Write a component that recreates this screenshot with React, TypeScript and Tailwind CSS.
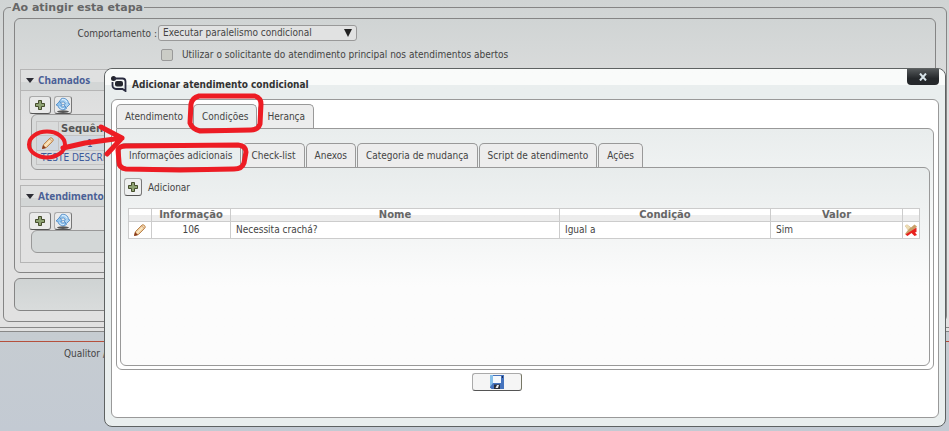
import type { ReactNode } from "react";

function PlusIcon() {
    return (
        <svg width="12" height="12" viewBox="0 0 12 12" aria-hidden="true">
            <path d="M4.500 1.500h3v3h3v3h-3v3h-3v-3h-3v-3h3z" fill="#8ea272" stroke="#454d2c" strokeWidth="1" />
        </svg>
    );
}

function RefreshIcon() {
    return (
        <svg width="16" height="16" viewBox="0 0 16 16" aria-hidden="true">
            <ellipse cx="8" cy="14.600" rx="6" ry="1.300" fill="#555" />
            <path d="M4 5 6.500 1.500C10 .5 13.500 3 13.500 6.500L15 7l-3.500 3.500L8.500 7.500l1.800-.5C10 5 8.500 4.500 7 5.200z" fill="#a9d2f3" stroke="#4a86c4" strokeWidth="0.800" />
            <path d="M1 8 4.500 4.500 7.500 8l-1.700.4C6.500 10 8 10.200 9.500 9.500l2 2C8.500 13.800 3.500 12.500 2.800 8.500z" fill="#8fc4f0" stroke="#4a86c4" strokeWidth="0.800" />
            <path d="M7 2.500c2-.5 4 .5 5 2.500M4.500 9.500c1 2 2.500 2.500 4.500 2" fill="none" stroke="#e3f2fd" strokeWidth="1" />
        </svg>
    );
}

function PencilIcon() {
    return (
        <svg width="14" height="14" viewBox="0 0 14 14" aria-hidden="true">
            <path d="M1.500 12.500 2.500 8.500 9 2c1.500-1 4 1 3 3L5.500 11.500z" fill="#efcd9b" stroke="#b98450" strokeWidth="1" />
            <path d="M4 10 10.500 3.500" stroke="#fdebc9" strokeWidth="1.300" />
            <path d="M1 13 2.100 9 5 12z" fill="#8a3a1c" />
            <path d="M8.500 2.800l3 3" stroke="#c9987a" strokeWidth="1" />
        </svg>
    );
}

function DeleteIcon() {
    return (
        <svg width="12" height="12" viewBox="0 0 12 12" aria-hidden="true">
            <path d="M0 2 2 .5 6 3.500 9.500.5 12 2.500 8 6.500 4.500 8.500 2 11.500 0 10 3 6z" fill="#c9a06a" />
            <path d="M11.500 3.500V8l-1.500.5 2 2.500-2.500 1L6.500 9 2.500 12 .5 10.500z" fill="#e8211d" />
            <path d="M0 2 2 .5 5.500 3.500 3 6z" fill="#ecdcb4" />
        </svg>
    );
}

function SaveIcon() {
    return (
        <svg width="14" height="14" viewBox="0 0 14 14" aria-hidden="true">
            <path d="M0 0h14v14H1.500L0 12.500z" fill="#4573bd" />
            <path d="M0 0h3v8L0 12z" fill="#86c0ea" />
            <path d="M3 1h8v7H3z" fill="#f4f8fc" />
            <path d="M12 1h1v2h-1z" fill="#1b2c5c" />
            <path d="M4 9.500h6V14H4z" fill="#2a2f3a" />
            <path d="M7 10h2l-1 3H5.500z" fill="#e8ebee" />
        </svg>
    );
}

function LogoIcon() {
    return (
        <svg width="16" height="16" viewBox="0 0 16 16" aria-hidden="true">
            <circle cx="2.500" cy="2.500" r="2.500" fill="#23252d" />
            <path d="M3 2.500h8.500a3 3 0 0 1 3 3V15l-3-2H5a3.500 3.500 0 0 1-3.500-3.500V6" fill="none" stroke="#2a2c40" strokeWidth="1.800" />
            <rect x="4" y="5" width="8" height="5.500" rx="2" fill="#23252d" />
        </svg>
    );
}

function IconButton({ label, wide, children }: { label: string; wide?: boolean; children: ReactNode }) {
    return (
        <button
            type="button"
            aria-label={label}
            className={`${wide ? "w-[22px]" : "w-[18px]"} flex h-[18px] items-center justify-center rounded-[3px] border border-[#aaa] border-r-[#777] border-b-[#555] bg-[#f0f0f0]/60`}
        >
            {children}
        </button>
    );
}

function Section({ title, children }: { title: string; children: ReactNode }) {
    return (
        <section className="border border-[#b5b5b5]">
            <h2 className="flex h-[21px] items-center gap-1 border-b border-[#b5b5b5] bg-linear-to-b from-[#dfe0e0] from-60% to-[#d3d6d6] to-60% pl-[5px] font-['Noto_Sans',sans-serif] font-bold text-[#4a5f96]">
                <svg width="8" height="5" viewBox="0 0 8 5" aria-hidden="true">
                    <path d="M0 0h8L4 5z" fill="#2c2c34" />
                </svg>
                {title}
            </h2>
            <div className="px-2 pt-[5px] pb-[9px]">
                <div className="flex gap-[3px]">
                    <IconButton label="Adicionar" wide>
                        <PlusIcon />
                    </IconButton>
                    <IconButton label="Atualizar">
                        <RefreshIcon />
                    </IconButton>
                </div>
                {children}
            </div>
        </section>
    );
}

function Tab({ title, active }: { title: string; active?: boolean }) {
    return (
        <button
            type="button"
            role="tab"
            aria-selected={!!active}
            className={`${active ? "bg-[#e9eeee]" : "bg-[#ededed]"} h-6 rounded-t-[5px] border border-b-0 border-[#999] px-2 whitespace-nowrap`}
        >
            {title}
        </button>
    );
}

function BackPage() {
    return (
        <>
            <main className="border-b border-[#888] bg-linear-to-b from-[#d0d4d4] to-[#e1e1e1] to-40% pb-[3px]">
                <div className="border-b border-[#888] pb-[5px]">
                    <fieldset className="mr-[2px] ml-[3px] rounded-md border border-[#858585] px-[10px] pt-1 pb-[10px]">
                        <legend className="-ml-[3px] h-[14px] px-px font-['DejaVu_Sans',sans-serif] text-[11px] leading-[15px] font-bold text-[#666]">Ao atingir esta etapa</legend>
                        <div className="rounded-md border border-[#858585] bg-linear-to-b from-[#d0d4d4] to-[#e1e1e1] to-40% px-[5px] pt-[6px] pb-[9px]">
                            <div className="flex items-center gap-px">
                                <label htmlFor="comportamento" className="w-[137px] text-right">
                                    Comportamento :
                                </label>
                                <div className="relative">
                                    <select id="comportamento" className="block h-4 w-[199px] appearance-none rounded-[3px] border border-[#999] bg-[#e1e2e2] px-1 leading-[14px]">
                                        <option>Executar paralelismo condicional</option>
                                    </select>
                                    <svg className="pointer-events-none absolute top-1 right-[5px]" width="8" height="8" viewBox="0 0 8 8" aria-hidden="true">
                                        <path d="M0 0h8L4 8z" fill="#222" />
                                    </svg>
                                </div>
                            </div>
                            <label className="mt-[7px] mb-2 ml-[141px] flex items-center gap-[9px] leading-[13px]">
                                <input type="checkbox" className="h-3 w-3 appearance-none rounded-[2px] border border-[#999] bg-[#cbccc6]" />
                                Utilizar o solicitante do atendimento principal nos atendimentos abertos
                            </label>
                            <div className="flex flex-col gap-[5px]">
                                <Section title="Chamados">
                                    <div className="ml-[2px] rounded-md border border-[#999] bg-[#d9dbdb] px-1 pt-[6px] pb-1">
                                        <table className="w-full border-collapse">
                                            <thead>
                                                <tr className="h-[14px] font-['DejaVu_Sans',sans-serif] leading-[12px] text-[#555]">
                                                    <th className="w-[22px] border border-[#c3c3c3]"></th>
                                                    <th className="border border-[#c3c3c3] pl-[2px] text-left">Sequência</th>
                                                </tr>
                                            </thead>
                                            <tbody>
                                                <tr className="h-[14px] bg-[#d0d7e0] leading-[13px] text-[#3d5a9b]">
                                                    <td className="border border-[#c3c3c3]">
                                                        <button type="button" aria-label="Editar" className="mx-auto block">
                                                            <PencilIcon />
                                                        </button>
                                                    </td>
                                                    <td className="border border-[#c3c3c3] pl-7">1</td>
                                                </tr>
                                                <tr className="leading-[13px] text-[#3d5a9b]">
                                                    <td colSpan={2} className="border border-[#c3c3c3] pl-1">
                                                        TESTE DESCRIÇÃO
                                                    </td>
                                                </tr>
                                            </tbody>
                                        </table>
                                    </div>
                                </Section>
                                <Section title="Atendimentos">
                                    <div className="ml-[2px] h-[23px] rounded-md border border-[#999] bg-[#d3d7d7]"></div>
                                </Section>
                            </div>
                        </div>
                        <div className="mt-[5px] h-[33px] rounded-md border border-[#858585] bg-linear-to-b from-[#cfd3d3] to-[#d9dcdc]"></div>
                    </fieldset>
                </div>
            </main>
            <footer className="flex-1 bg-linear-to-b from-[#c6ccd1] to-[#c3cad3] pt-[9px]">
                <div className="border-t border-[#b5503c] pt-1 pl-16 leading-[16px]">Qualitor /</div>
            </footer>
        </>
    );
}

const tabs = ["Atendimento", "Condições", "Herança"];
const subTabs = ["Informações adicionais", "Check-list", "Anexos", "Categoria de mudança", "Script de atendimento", "Ações"];

function Dialog() {
    return (
        <div
            role="dialog"
            aria-labelledby="dialog-title"
            className="absolute top-[68px] right-[3px] bottom-1 left-[104px] flex flex-col rounded-lg border border-[#5e6262] bg-[#e9eeee] px-[6px] pb-2"
        >
            <header className="-mx-[6px] flex h-[30px] shrink-0 items-start rounded-t-lg bg-linear-to-b from-[#f9fbfa] from-[16px] to-[#e9eeee] to-[16px] px-[6px]">
                <div className="flex h-[30px] flex-1 items-center gap-[5px]">
                    <LogoIcon />
                    <h1 id="dialog-title" className="font-bold text-[#333]">
                        Adicionar atendimento condicional
                    </h1>
                </div>
                <button
                    type="button"
                    aria-label="Fechar"
                    className="flex h-4 w-8 items-center justify-center rounded-b-[4px] bg-linear-to-b from-[#55595b] to-[#25282b] to-60%"
                >
                    <svg width="8" height="8" viewBox="0 0 8 8" aria-hidden="true">
                        <path d="M1 0.500 7 7.500M7 0.500 1 7.500" stroke="#d8e4ea" strokeWidth="2" />
                    </svg>
                </button>
            </header>
            <div className="flex flex-1 flex-col rounded-md border border-[#999] bg-white px-1 pt-1">
                <div role="tablist" className="flex gap-px">
                    {tabs.map((t) => (
                        <Tab key={t} title={t} active={t === "Condições"} />
                    ))}
                </div>
                <div className="rounded-b-md rounded-tr-md border border-[#999] bg-linear-to-b from-[#e9eded] to-white to-60% p-[3px] pt-[14px]">
                    <div role="tablist" className="flex gap-px">
                        {subTabs.map((t) => (
                            <Tab key={t} title={t} active={t === "Informações adicionais"} />
                        ))}
                    </div>
                    <div className="min-h-[199px] rounded-b-md rounded-tr-md border border-[#999] bg-linear-to-b from-[#e8ecec] to-[#fcfcfc] to-60% pt-[10px] pr-[9px] pl-[3px]">
                        <div className="flex items-center gap-[6px]">
                            <IconButton label="Adicionar informação">
                                <PlusIcon />
                            </IconButton>
                            Adicionar
                        </div>
                        <div className="mt-3 ml-1">
                            <table className="w-full table-fixed border-collapse bg-white">
                                <colgroup>
                                    <col className="w-[23px]" />
                                    <col className="w-[79px]" />
                                    <col />
                                    <col className="w-[211px]" />
                                    <col className="w-[132px]" />
                                    <col className="w-[17px]" />
                                </colgroup>
                                <thead>
                                    <tr className="h-[13px] bg-linear-to-b from-white from-50% to-[#ededed] to-50% font-['DejaVu_Sans',sans-serif] leading-[12px] text-[#666]">
                                        <th className="border border-[#ccc]"></th>
                                        <th className="border border-[#ccc]">Informação</th>
                                        <th className="border border-[#ccc]">Nome</th>
                                        <th className="border border-[#ccc]">Condição</th>
                                        <th className="border border-[#ccc]">Valor</th>
                                        <th className="border border-[#ccc]"></th>
                                    </tr>
                                </thead>
                                <tbody>
                                    <tr className="h-[17px] leading-[16px]">
                                        <td className="border border-[#ccc]">
                                            <button type="button" aria-label="Editar condição" className="mx-auto block">
                                                <PencilIcon />
                                            </button>
                                        </td>
                                        <td className="border border-[#ccc] text-center">106</td>
                                        <td className="border border-[#ccc] pl-[5px]">Necessita crachá?</td>
                                        <td className="border border-[#ccc] pl-[5px]">Igual a</td>
                                        <td className="border border-[#ccc] pl-[5px]">Sim</td>
                                        <td className="border border-[#ccc]">
                                            <button type="button" aria-label="Excluir condição" className="mx-auto block">
                                                <DeleteIcon />
                                            </button>
                                        </td>
                                    </tr>
                                </tbody>
                            </table>
                        </div>
                    </div>
                </div>
                <button
                    type="button"
                    aria-label="Salvar"
                    className="mx-auto mt-[3px] flex h-[18px] w-[50px] -translate-x-7 items-center justify-center rounded-[3px] border border-[#aaa] border-r-[#776] border-b-[#555] bg-[#f5f5f5]"
                >
                    <SaveIcon />
                </button>
            </div>
        </div>
    );
}

// Red marker strokes drawn over the screen
function Markers() {
    return (
        <svg className="pointer-events-none absolute top-0 left-0" width="320" height="200" viewBox="0 0 320 200" fill="none" stroke="#ed1c24" strokeWidth="5" strokeLinecap="round" strokeLinejoin="round" aria-hidden="true">
            <path d="M199 96 255 96Q261 98 261 104L260 124Q258 130 251 130L200 131Q192 129 190 123L191 104Q192 98 199 96z" />
            <path d="M126 146 238 145Q246 146 246 152L244 163Q242 169 234 169L180 170 126 169Q119 168 119 162L118 150Q119 146 126 146z" />
            <ellipse cx="47" cy="144.500" rx="18" ry="13" strokeWidth="4" />
            <path d="M63 148 85 143 122 138M101 127 122 138 107 154" strokeWidth="5" />
        </svg>
    );
}

export default function App() {
    return (
        <div className="relative flex min-h-screen flex-col overflow-hidden font-['DejaVu_Sans_Condensed','Noto_Sans',sans-serif] text-[10px] leading-[15px] text-[#444]">
            <BackPage />
            <Dialog />
            <Markers />
        </div>
    );
}
